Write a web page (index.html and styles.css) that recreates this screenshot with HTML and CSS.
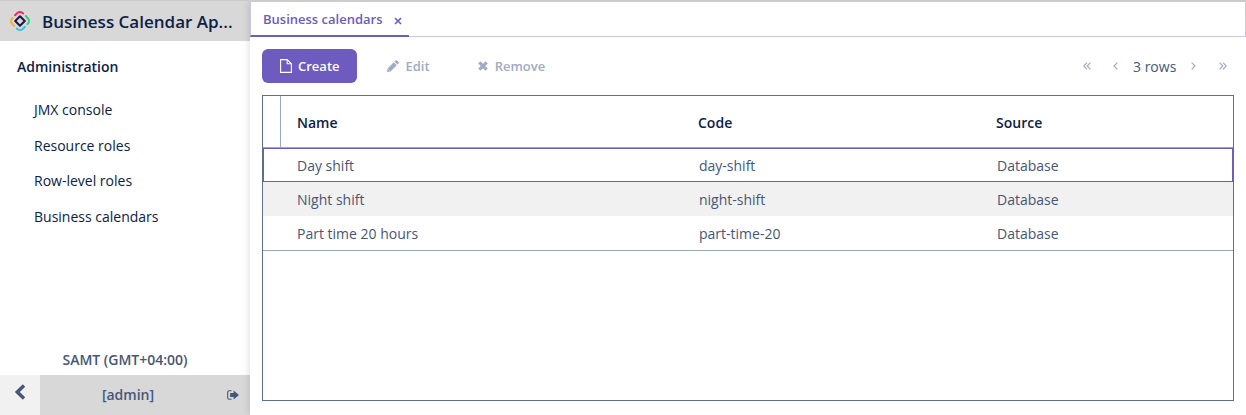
FILE: index.html
```html
<!DOCTYPE html>
<html lang="en">
<head>
<meta charset="utf-8">
<title>Business calendars</title>
<link rel="stylesheet" href="styles.css">
</head>
<body>
<div class="app">
  <aside class="sidebar">
    <header class="brand">
      <svg class="logo" width="20" height="20" viewBox="0 0 20 20" fill="none" stroke-width="1.9" stroke-linecap="round">
        <path d="M5 4.2 7.6 1.8Q10 .2 12.4 1.8L13.2 2.6" stroke="#f4246c"/>
        <path d="M15.8 5 18.2 7.6Q19.8 10 18.2 12.4L17.4 13.2" stroke="#2ecc85"/>
        <path d="M15 15.8 12.4 18.2Q10 19.8 7.6 18.2L6.8 17.4" stroke="#2fc3e4"/>
        <path d="M4.2 15 1.8 12.4Q.2 10 1.8 7.6L2.6 6.8" stroke="#fbb02d"/>
        <path d="M10 5.2 14.8 10 10 14.8 5.2 10Z" stroke="#1e1548" stroke-width="2" stroke-linejoin="round"/>
      </svg>
      <span class="brand-name">Business Calendar Ap...</span>
    </header>
    <nav class="menu">
      <div class="menu-title">Administration</div>
      <a class="menu-item">JMX console</a>
      <a class="menu-item">Resource roles</a>
      <a class="menu-item">Row-level roles</a>
      <a class="menu-item">Business calendars</a>
    </nav>
    <div class="timezone">SAMT (GMT+04:00)</div>
    <footer class="userbar">
      <div class="collapse">
        <svg width="12" height="16" viewBox="0 0 12 16" fill="none" stroke="#455678" stroke-width="3.4"><path d="M10 1.5 3.3 8 10 14.5"/></svg>
      </div>
      <div class="user">[admin]</div>
      <svg class="logout" width="12" height="10" viewBox="0 0 12 10">
        <path d="M4.5 .7H2.2Q.7 .7.7 2.2V7.8Q.7 9.3 2.2 9.3H4.5" fill="none" stroke="#455678" stroke-width="1.1"/>
        <path d="M3.2 3H6.6V.4L12 5 6.6 9.6V7H3.2Z" fill="#455678"/>
      </svg>
    </footer>
  </aside>
  <main class="content">
    <div class="tabs">
      <div class="tab"><span>Business calendars</span>
        <svg class="tab-close" width="8" height="8" viewBox="0 0 8 8" stroke="#6d5bc0" stroke-width="1.6"><path d="M1 1 7 7M7 1 1 7"/></svg>
      </div>
    </div>
    <div class="toolbar">
      <button class="btn primary">
        <svg width="12" height="14" viewBox="0 0 12 14" fill="none" stroke="#fff" stroke-width="1.1"><path d="M.6 .6H7.2L11.4 4.8V13.4H.6ZM7.2 .6V4.8H11.4"/></svg>
        <span>Create</span>
      </button>
      <button class="btn edit">
        <svg width="12" height="12" viewBox="0 0 12 12"><path d="M0 12 .6 8.4 6.8 2.2 9.8 5.2 3.6 11.4ZM7.4 1.6 8.6.4Q9.3-.1 9.9.4L11.6 2.1Q12.1 2.7 11.6 3.4L10.4 4.6Z" fill="#a0abc4"/><path d="M1.4 9.4 2.6 10.6" stroke="#fff" stroke-width=".7"/></svg>
        <span>Edit</span>
      </button>
      <button class="btn remove">
        <svg width="10" height="10" viewBox="0 0 10 10" stroke="#a0abc4" stroke-width="3.1"><path d="M1.3 1.3 8.7 8.7M8.7 1.3 1.3 8.7"/></svg>
        <span>Remove</span>
      </button>
      <div class="pager">
        <svg width="8" height="8" viewBox="0 0 8 8"><path d="M4 .7.8 4 4 7.3M7.4 .7 4.2 4 7.4 7.3"/></svg>
        <svg class="prev" width="5" height="8" viewBox="0 0 5 8"><path d="M4.3 .7 1 4 4.3 7.3"/></svg>
        <span class="count">3 rows</span>
        <svg class="next" width="5" height="8" viewBox="0 0 5 8"><path d="M.7 .7 4 4 .7 7.3"/></svg>
        <svg width="8" height="8" viewBox="0 0 8 8"><path d="M.6 .7 3.8 4 .6 7.3M4 .7 7.2 4 4 7.3"/></svg>
      </div>
    </div>
    <div class="grid">
      <div class="row head"><span class="gutter"></span><span>Name</span><span>Code</span><span>Source</span></div>
      <div class="row selected"><span></span><span>Day shift</span><span>day-shift</span><span>Database</span></div>
      <div class="row striped"><span></span><span>Night shift</span><span>night-shift</span><span>Database</span></div>
      <div class="row last"><span></span><span>Part time 20 hours</span><span>part-time-20</span><span>Database</span></div>
    </div>
  </main>
</div>
</body>
</html>
```
FILE: styles.css
```css
* { box-sizing: border-box; }
body {
  margin: 0;
  font: 14px/20px "Open Sans", "Noto Sans", sans-serif;
  color: #455678;
  background: #fff;
}
svg { display: block; flex: none; }
.app {
  display: flex;
  height: 415px;
  border-top: 1px solid #cbcbcb;
  overflow: hidden;
}
.sidebar {
  display: flex;
  flex-direction: column;
  width: 250px;
  flex: none;
}
.brand {
  display: flex;
  align-items: center;
  height: 40px;
  padding-left: 10px;
  background: #d8d8d8;
}
.brand-name {
  margin-left: 12px;
  padding-top: 2px;
  font-size: 17px;
  font-weight: 600;
  color: #0c2146;
  white-space: nowrap;
}
.menu { flex: 1; padding-top: 16px; color: #0c2146; }
.menu-title { padding-left: 17px; margin-bottom: 15px; font-weight: 600; }
.menu-item { display: block; height: 35.6px; padding: 8px 0 0 34px; }
.timezone { text-align: center; font-weight: 600; margin-bottom: 5px; }
.userbar { display: flex; align-items: center; height: 40px; background: #d8d8d8; }
.collapse {
  display: flex;
  justify-content: center;
  width: 40px;
  height: 40px;
  padding-top: 9px;
  background: #f1f1f1;
}
.user { width: 176px; text-align: center; font-weight: 600; }
.logout { margin-left: 11px; }
.content {
  display: flex;
  flex-direction: column;
  flex: 1;
  position: relative;
  background: #fff;
  box-shadow: 0 0 8px rgba(0, 0, 0, .16);
}
.tabs {
  display: flex;
  height: 36px;
  border: 1px solid #cdc6e8;
  border-left: 0;
}
.tab {
  display: flex;
  height: 35px;
  width: 159px;
  padding: 7px 0 0 12px;
  border-bottom: 2px solid #6d5bc0;
  border-left: 1px solid #cdc6e8;
  color: #6d5bc0;
  font-size: 13px;
  font-weight: 600;
}
.tab span { width: 131px; white-space: nowrap; }
.tab-close { margin-top: 8px; }
.toolbar { display: flex; align-items: center; height: 34px; margin: 12px 12px 0; }
.btn {
  display: flex;
  align-items: center;
  height: 34px;
  padding: 0;
  border: 0;
  background: none;
  color: #a0abc4;
  font: 600 13px/20px "Open Sans", "Noto Sans", sans-serif;
}
.btn span { margin-left: 6px; }
.primary { width: 95px; padding-left: 18px; border-radius: 6px; background: #6d5bc0; color: #fff; }
.edit { margin-left: 30px; }
.edit span { margin-left: 6.5px; }
.remove { margin-left: 48px; }
.remove span { margin-left: 7px; }
.pager { display: flex; align-items: center; margin-left: auto; padding-right: 7px; }
.pager svg { fill: none; stroke: #a0abc4; stroke-width: 1.2; }
.prev { margin-left: 22px; }
.count { width: 43px; margin: 1px 15px 0; white-space: nowrap; }
.next { margin-right: 23px; }
.grid {
  height: 306px;
  margin: 12px 12px 0;
  border: 1px solid #5f6f93;
}
.row {
  display: grid;
  grid-template-columns: 34px 402px 298px 1fr;
  align-items: center;
  height: 34px;
  padding-top: 2px;
}
.head {
  height: 52px;
  padding-top: 0;
  border-bottom: 1px solid #9aa7c2;
  grid-template-columns: 34px 401px 298px 1fr;
  font-weight: 600;
  color: #0c2146;
}
.head span { padding-top: 2px; }
.gutter { width: 18px; height: 51px; border-right: 1px solid #9aa7c2; }
.selected { outline: 1px solid #6d5bc0; outline-offset: -1px; }
.striped { background: #f1f1f1; }
.last { height: 35px; border-bottom: 1px solid #9aa7c2; }
```
